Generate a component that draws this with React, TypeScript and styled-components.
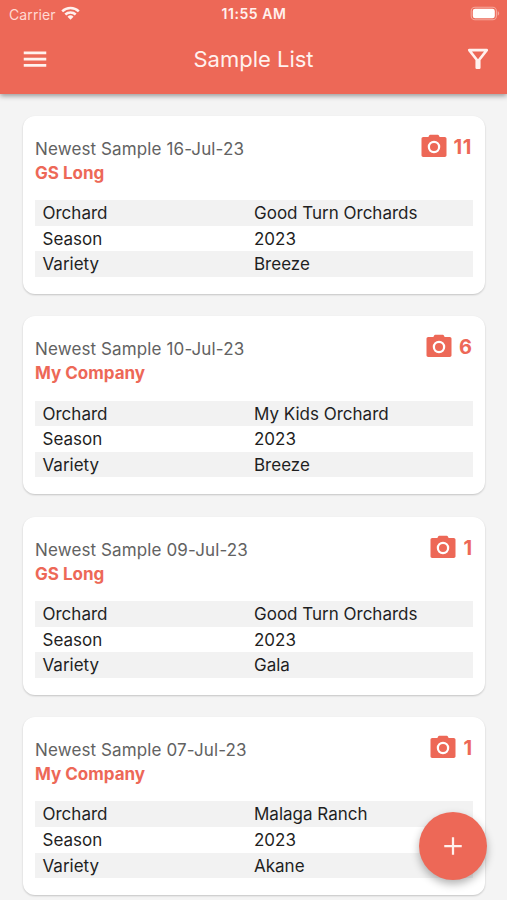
import React from "react";
import styled, { createGlobalStyle } from "styled-components";

const coral = "#ed6857";

const GlobalStyle = createGlobalStyle`
  * { box-sizing: border-box; }
  html, body { margin: 0; padding: 0; }
  body {
    height: 900px;
    overflow: hidden;
    background: #f4f4f4;
    font-family: Inter, "Liberation Sans", sans-serif;
  }
`;

const Screen = styled.div`
  position: relative;
  height: 900px;
  overflow: hidden;
  display: flex;
  flex-direction: column;
  background: #f4f4f4;
`;

const Header = styled.header`
  flex: none;
  height: 94px;
  background: ${coral};
  color: #fff1ee;
  box-shadow: 0 2px 5px rgba(0, 0, 0, 0.38);
`;

const StatusBar = styled.div`
  display: grid;
  grid-template-columns: 1fr auto 1fr;
  align-items: center;
  height: 27px;
  padding: 0 7px 0 9px;
`;

const Carrier = styled.div`
  display: flex;
  align-items: center;
  gap: 5.5px;
  font-size: 14px;
  letter-spacing: 0.1px;
  line-height: 27px;
  color: #ffd9d3;

  svg {
    margin-top: -2px;
  }
`;

const Clock = styled.div`
  margin-left: -1px;
  font-size: 14px;
  font-weight: 600;
  letter-spacing: 0.55px;
  line-height: 28px;
`;

const BatterySlot = styled.div`
  display: flex;
  justify-content: flex-end;
  margin-top: -1px;
`;

const AppBar = styled.div`
  display: grid;
  grid-template-columns: 30px 1fr 30px;
  align-items: center;
  height: 65px;
  padding: 0 14.5px 0 20px;
`;

const Title = styled.h1`
  margin: -2px 5.5px 0 0;
  text-align: center;
  font-size: 22px;
  font-weight: 400;
  line-height: 30px;
`;

const IconButton = styled.button`
  display: flex;
  margin-top: -1px;
  padding: 0;
  border: 0;
  background: none;
  color: inherit;
`;

const List = styled.main`
  display: flex;
  flex-direction: column;
  gap: 22.4px;
  padding: 22px 22px 0 23px;
`;

const Card = styled.article`
  flex: none;
  height: 178px;
  padding: 20px 12px 0;
  border-radius: 12px;
  background: #fff;
  box-shadow: 0 1px 2px rgba(0, 0, 0, 0.2);
`;

const CardHead = styled.div`
  display: flex;
  justify-content: space-between;
  height: 64.3px;
`;

const Newest = styled.div`
  font-size: 17px;
  line-height: 26px;
  letter-spacing: 0.12px;
  color: #626262;
`;

const Company = styled.div`
  margin-top: -1px;
  font-size: 17px;
  font-weight: 700;
  line-height: 25px;
  color: ${coral};
`;

const PhotoCount = styled.div`
  display: flex;
  align-items: center;
  gap: 4px;
  height: 30px;
  margin-top: -4px;
  margin-right: 1px;
  color: ${coral};
  font-size: 20px;
  font-weight: 700;
`;

const CountLabel = styled.span<{ $wide: boolean }>`
  letter-spacing: ${(p) => (p.$wide ? "0.6px" : "0")};
  margin-left: 1px;
`;

const Details = styled.dl`
  margin: 0;
`;

const DetailRow = styled.div<{ $shaded: boolean }>`
  display: grid;
  grid-template-columns: 211.5px 1fr;
  height: 25.6px;
  padding-left: 7.5px;
  background: ${(p) => (p.$shaded ? "#f2f2f2" : "transparent")};
  font-size: 17px;
  line-height: 27px;
  color: #1f1f1f;
`;

const Term = styled.dt`
  margin: 0;
`;

const Value = styled.dd`
  margin: 0;
`;

const AddButton = styled.button`
  position: absolute;
  right: 20px;
  bottom: 20px;
  display: flex;
  align-items: center;
  justify-content: center;
  width: 68px;
  height: 68px;
  padding: 0;
  border: 0;
  border-radius: 50%;
  background: ${coral};
  color: #fff1ee;
  box-shadow: 0 4px 8px rgba(0, 0, 0, 0.3);
`;

const Icon = ({ d }: { d: string }) => (
  <svg width="30" height="30" viewBox="0 0 24 24" fill="currentColor">
    <path d={d} />
  </svg>
);

const icons = {
  menu: "M3 18.1h18v-2.2H3v2.2zm0-5h18v-2.2H3v2.2zm0-7.2v2.2h18V5.9H3z",
  plus: "M19 12.9h-6.1V19h-1.8v-6.1H5v-1.8h6.1V5h1.8v6.1H19v1.8z",
};

const FilterIcon = () => (
  <svg width="30" height="30" viewBox="0 0 24 24">
    <path
      fill="none"
      stroke="currentColor"
      strokeWidth="2.1"
      strokeLinejoin="round"
      d="M5 4.9h14L13 12.6v6.4h-2v-6.4z"
    />
    <path fill="currentColor" d="M10.5 12h3v7.5h-3z" />
  </svg>
);

const CameraIcon = () => (
  <svg width="30" height="30" viewBox="0 0 24 24">
    <path
      fill="currentColor"
      d="M9 2.2a1 1 0 0 0-.9.6L7.5 4H3.4C2.6 4 2 4.6 2 5.4v13.2C2 19.4 2.6 20 3.4 20h17.2c.8 0 1.4-.6 1.4-1.4V5.4C22 4.6 21.4 4 20.6 4h-4.1l-.6-1.2a1 1 0 0 0-.9-.6H9z"
    />
    <circle cx="12" cy="12" r="4.1" fill="none" stroke="#fff" strokeWidth="1.8" />
  </svg>
);

const WifiIcon = () => (
  <svg width="19" height="14" viewBox="0 0 19 14" fill="none" stroke="#fff1ee" strokeWidth="2.5">
    <path d="M1.2 5.3a12 12 0 0 1 16.6 0" />
    <path d="M4.3 8.5a7.5 7.5 0 0 1 10.4 0" />
    <path d="M6.5 10.7a4.4 4.4 0 0 1 6 0L9.5 13.8z" fill="#fff1ee" stroke="none" />
  </svg>
);

const BatteryIcon = () => (
  <svg width="30" height="15" viewBox="0 0 30 15">
    <rect x="1.2" y="1.2" width="25.2" height="12.6" rx="3.8" fill="none" stroke="#f5a79d" strokeWidth="1.1" />
    <rect x="2.8" y="2.8" width="22" height="9.4" rx="2.3" fill="#fff" />
    <path d="M27.7 5.3c1.9.6 1.9 3.8 0 4.4z" fill="#f5a79d" />
  </svg>
);

interface Sample {
  date: string;
  company: string;
  photos: number;
  orchard: string;
  season: string;
  variety: string;
}

const samples: Sample[] = [
  { date: "16-Jul-23", company: "GS Long", photos: 11, orchard: "Good Turn Orchards", season: "2023", variety: "Breeze" },
  { date: "10-Jul-23", company: "My Company", photos: 6, orchard: "My Kids Orchard", season: "2023", variety: "Breeze" },
  { date: "09-Jul-23", company: "GS Long", photos: 1, orchard: "Good Turn Orchards", season: "2023", variety: "Gala" },
  { date: "07-Jul-23", company: "My Company", photos: 1, orchard: "Malaga Ranch", season: "2023", variety: "Akane" },
];

const SampleCard = ({ sample }: { sample: Sample }) => {
  const rows = [
    ["Orchard", sample.orchard],
    ["Season", sample.season],
    ["Variety", sample.variety],
  ];
  return (
    <Card>
      <CardHead>
        <div>
          <Newest>Newest Sample {sample.date}</Newest>
          <Company>{sample.company}</Company>
        </div>
        <PhotoCount>
          <CameraIcon />
          <CountLabel $wide={sample.photos > 9}>{sample.photos}</CountLabel>
        </PhotoCount>
      </CardHead>
      <Details>
        {rows.map(([term, value], i) => (
          <DetailRow key={term} $shaded={i % 2 === 0}>
            <Term>{term}</Term>
            <Value>{value}</Value>
          </DetailRow>
        ))}
      </Details>
    </Card>
  );
};

export default function App() {
  return (
    <Screen>
      <GlobalStyle />
      <Header>
        <StatusBar>
          <Carrier>
            Carrier
            <WifiIcon />
          </Carrier>
          <Clock>11:55 AM</Clock>
          <BatterySlot>
            <BatteryIcon />
          </BatterySlot>
        </StatusBar>
        <AppBar>
          <IconButton aria-label="Menu">
            <Icon d={icons.menu} />
          </IconButton>
          <Title>Sample List</Title>
          <IconButton aria-label="Filter">
            <FilterIcon />
          </IconButton>
        </AppBar>
      </Header>
      <List>
        {samples.map((s) => (
          <SampleCard key={s.date} sample={s} />
        ))}
      </List>
      <AddButton aria-label="Add sample">
        <Icon d={icons.plus} />
      </AddButton>
    </Screen>
  );
}
